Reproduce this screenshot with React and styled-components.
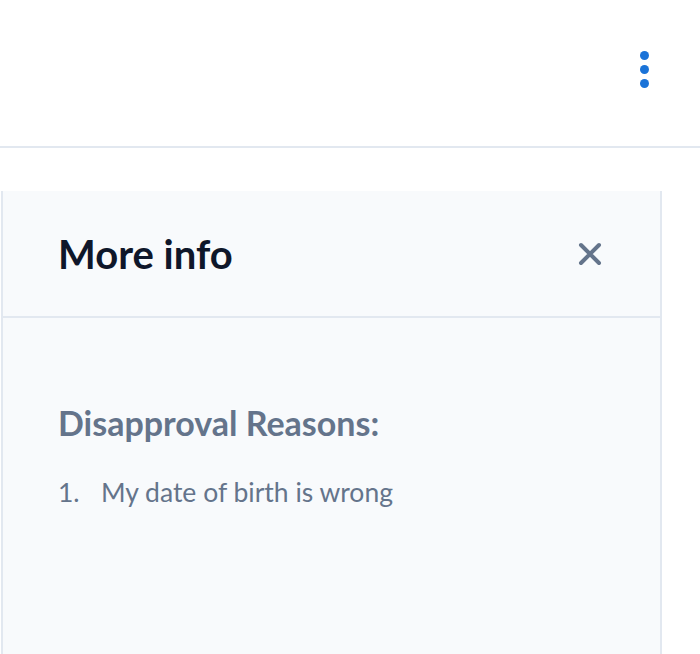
import React from 'react';
import styled, { createGlobalStyle } from 'styled-components';

const GlobalStyle = createGlobalStyle`
  body {
    margin: 0;
    background: #ffffff;
    font-family: Lato, "Noto Sans", sans-serif;
  }
`;

const TopBar = styled.header`
  height: 148px;
  box-sizing: border-box;
  border-bottom: 2px solid #e2e8f0;
  display: flex;
  align-items: center;
  justify-content: flex-end;
  padding: 0 51px 8px 0;
`;

const MenuButton = styled.button`
  border: 0;
  background: none;
  padding: 0;
  width: 10px;
  display: flex;
  flex-direction: column;
  align-items: center;
  gap: 5px;
  cursor: pointer;
`;

const Dot = styled.span`
  width: 9px;
  height: 9px;
  border-radius: 50%;
  background: #1a73d8;
`;

const Main = styled.main`
  padding-top: 43px;
  display: flex;
`;

const Drawer = styled.aside`
  margin-left: 1px;
  width: 661px;
  height: 470px;
  box-sizing: border-box;
  background: #f8fafc;
  border-left: 2px solid #e2e8f0;
  border-right: 2px solid #e2e8f0;
`;

const DrawerHeader = styled.div`
  height: 127px;
  box-sizing: border-box;
  border-bottom: 2px solid #e2e8f0;
  display: flex;
  align-items: center;
  justify-content: space-between;
  padding: 0 58px 0 55px;
`;

const Title = styled.h2`
  margin: 0;
  font-size: 40px;
  font-weight: 700;
  color: #0f172a;
`;

const CloseButton = styled.button`
  border: 0;
  background: none;
  padding: 0;
  width: 24px;
  height: 24px;
  display: flex;
  color: #64748b;
  cursor: pointer;
`;

const DrawerBody = styled.div`
  padding: 84px 55px 0;
`;

const SectionTitle = styled.h3`
  margin: 0 0 33px;
  font-size: 34px;
  font-weight: 700;
  color: #64748b;
`;

const Reasons = styled.ol`
  margin: 0;
  padding: 0;
  list-style: none;
`;

const Reason = styled.li`
  display: flex;
  font-size: 26.5px;
  color: #64748b;
  gap: 20px;
`;

const ReasonNum = styled.span`
  width: 23px;
`;

export default function App() {
  return (
    <>
      <GlobalStyle />
      <TopBar>
        <MenuButton aria-label="More actions">
          <Dot />
          <Dot />
          <Dot />
        </MenuButton>
      </TopBar>
      <Main>
        <Drawer>
          <DrawerHeader>
            <Title>More info</Title>
            <CloseButton aria-label="Close">
              <svg width="24" height="24" viewBox="0 0 24 24" fill="none" stroke="currentColor" strokeWidth="4" strokeLinecap="round">
                <path d="M3 3l18 18M21 3L3 21" />
              </svg>
            </CloseButton>
          </DrawerHeader>
          <DrawerBody>
            <SectionTitle>Disapproval Reasons:</SectionTitle>
            <Reasons>
              <Reason>
                <ReasonNum>1.</ReasonNum>
                <span>My date of birth is wrong</span>
              </Reason>
            </Reasons>
          </DrawerBody>
        </Drawer>
      </Main>
    </>
  );
}
